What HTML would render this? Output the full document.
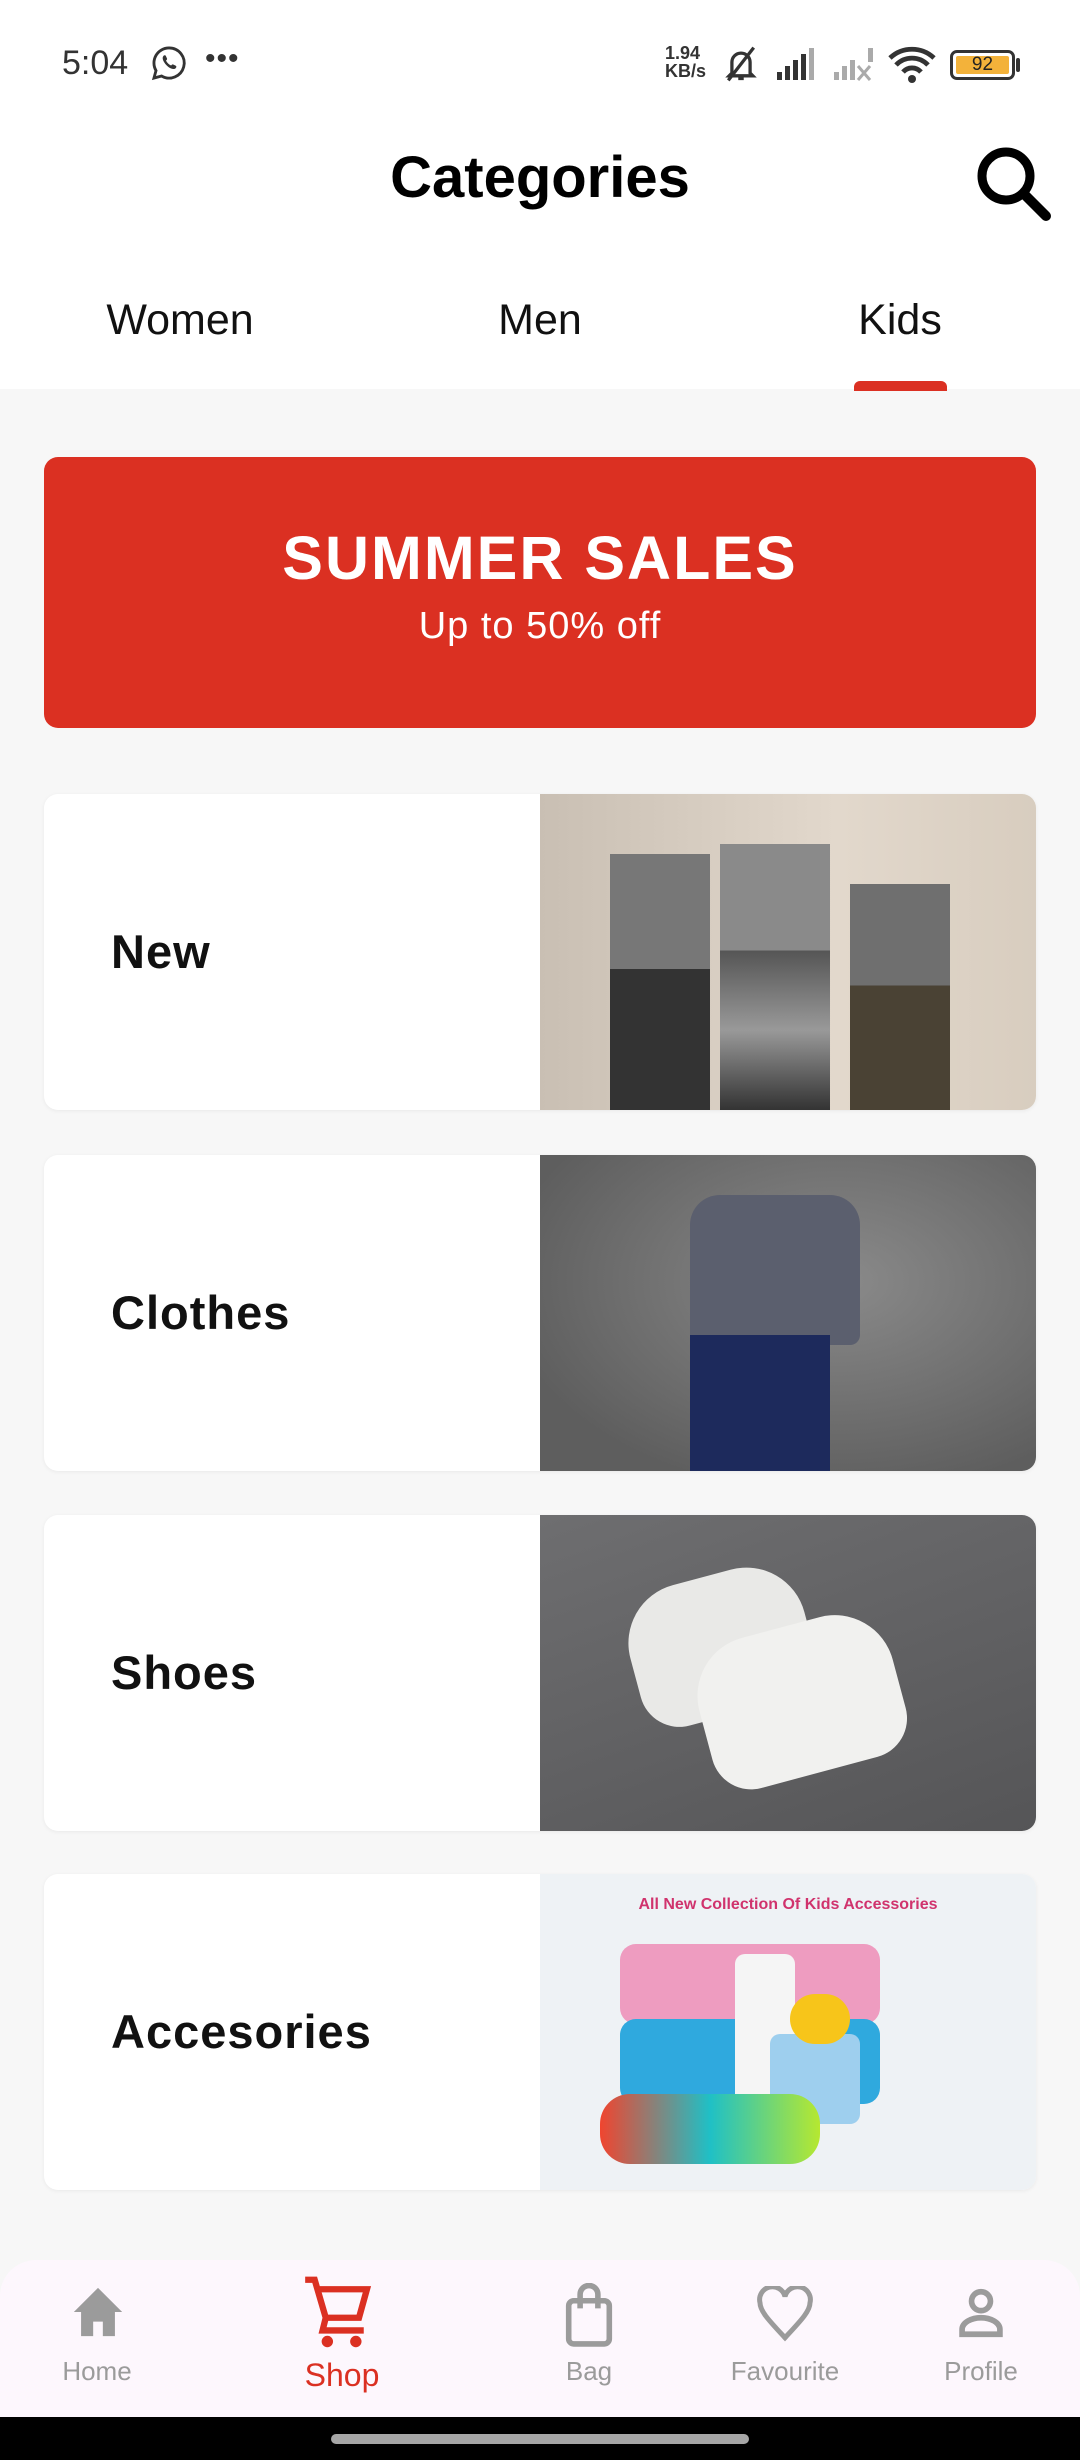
<!DOCTYPE html>
<html><head><meta charset="utf-8"><style>
*{margin:0;padding:0;box-sizing:border-box}
body{width:1080px;height:2460px;background:#f7f7f7;font-family:"Liberation Sans",sans-serif;position:relative;overflow:hidden}
.abs{position:absolute}
.hdr{left:0;top:0;width:1080px;height:389px;background:#fff}
.tab{top:296px;font-size:43px;color:#111;transform:translateX(-50%)}
.banner{left:44px;top:457px;width:992px;height:271px;background:#db3022;border-radius:14px;color:#fff;text-align:center}
.card{left:44px;width:992px;height:316px;background:#fff;border-radius:14px;overflow:hidden;box-shadow:0 1px 4px rgba(0,0,0,.06)}
.card .t{position:absolute;left:67px;top:0;line-height:316px;font-size:47px;font-weight:bold;color:#111;letter-spacing:1px}
.card .img{position:absolute;left:496px;top:0;width:496px;height:316px}
.nav{left:0;top:2260px;width:1080px;height:157px;background:#fdf7fd;border-radius:36px 36px 0 0}
.lbl{top:2356px;font-size:26px;color:#9b9b9b;transform:translateX(-50%)}
</style></head><body>
<div class="abs hdr"></div>
<div class="abs" style="left:62px;top:44px;font-size:34px;color:#333">5:04</div>
<svg class="abs" style="left:150px;top:44px" width="38" height="38" viewBox="0 0 24 24"><path d="M12 2.5a9.5 9.5 0 0 0-8.2 14.3L2.5 21.5l4.8-1.3A9.5 9.5 0 1 0 12 2.5z" fill="none" stroke="#333" stroke-width="1.8"/><path d="M8.5 7.5c.5-.6 1.2-.5 1.5 0l.8 1.8c.1.4-.4.9-.7 1.2.7 1.4 1.8 2.4 3.2 3.1.3-.3.8-.9 1.2-.7l1.8.8c.5.3.5 1-.1 1.6-1.5 1.4-4.5-.4-6-2.1s-3-4.2-1.7-5.7z" fill="#333"/></svg>
<div class="abs" style="left:205px;top:42px;font-size:30px;color:#333;letter-spacing:1px">•••</div>
<div class="abs" style="left:665px;top:44px;font-size:18px;line-height:18px;color:#333;font-weight:bold">1.94<br>KB/s</div>
<svg class="abs" style="left:718px;top:44px" width="46" height="40" viewBox="0 0 24 22"><path d="M7 16V10a5 5 0 0 1 10 0v6l1.5 1.5h-13z M10.5 19h3" fill="none" stroke="#333" stroke-width="1.8"/><path d="M5 20L19 2" stroke="#333" stroke-width="1.8"/></svg>
<svg class="abs" style="left:775px;top:46px" width="50" height="36" viewBox="0 0 50 36"><rect x="2" y="26" width="5" height="8" fill="#333"/><rect x="10" y="20" width="5" height="14" fill="#333"/><rect x="18" y="14" width="5" height="20" fill="#333"/><rect x="26" y="8" width="5" height="26" fill="#333"/><rect x="34" y="2" width="5" height="32" fill="#aaa"/></svg>
<svg class="abs" style="left:832px;top:46px" width="46" height="36" viewBox="0 0 46 36"><rect x="2" y="26" width="5" height="8" fill="#aaa"/><rect x="10" y="20" width="5" height="14" fill="#aaa"/><rect x="18" y="14" width="5" height="20" fill="#aaa"/><rect x="36" y="2" width="5" height="14" fill="#aaa"/><path d="M26 20l12 14M38 20L26 34" stroke="#aaa" stroke-width="3"/></svg>
<svg class="abs" style="left:888px;top:44px" width="48" height="40" viewBox="0 0 24 20"><path d="M1 7a16 16 0 0 1 22 0M4 10.5a11 11 0 0 1 16 0M7.5 14a6 6 0 0 1 9 0" fill="none" stroke="#333" stroke-width="2.4"/><circle cx="12" cy="17.5" r="2" fill="#333"/></svg>
<div class="abs" style="left:950px;top:50px;width:65px;height:30px;border:3px solid #333;border-radius:7px;padding:3px"><div style="width:100%;height:100%;background:#f3b23a;border-radius:2px;font-size:19px;line-height:18px;text-align:center;color:#222">92</div></div>
<div class="abs" style="left:1016px;top:58px;width:4px;height:14px;background:#333;border-radius:2px"></div>

<div class="abs" style="left:0;width:1080px;top:144px;text-align:center;font-size:58px;font-weight:bold;color:#000">Categories</div>
<svg class="abs" style="left:974px;top:144px" width="80" height="78" viewBox="0 0 40 39"><circle cx="16" cy="16" r="12" fill="none" stroke="#000" stroke-width="4.5"/><path d="M25 25l11 11" stroke="#000" stroke-width="5" stroke-linecap="round"/></svg>

<div class="abs tab" style="left:180px">Women</div>
<div class="abs tab" style="left:540px">Men</div>
<div class="abs tab" style="left:900px">Kids</div>
<div class="abs" style="left:854px;top:381px;width:93px;height:10px;background:#db3022;border-radius:6px 6px 0 0"></div>

<div class="abs banner">
<div style="margin-top:66px;font-size:61px;font-weight:bold;letter-spacing:2px">SUMMER SALES</div>
<div style="margin-top:12px;font-size:38px;letter-spacing:1px">Up to 50% off</div>
</div>

<div class="abs card" style="top:794px"><div class="t">New</div>
<div class="img" style="background:linear-gradient(90deg,#c9bfb3,#e2d8cc 60%,#d8cdbf)">
<div class="abs" style="left:70px;top:60px;width:100px;height:256px;background:linear-gradient(#777 0,#777 45%,#333 45%)"></div>
<div class="abs" style="left:180px;top:50px;width:110px;height:266px;background:linear-gradient(#8a8a8a 0,#8a8a8a 40%,#555 40%,#999 70%,#333)"></div>
<div class="abs" style="left:310px;top:90px;width:100px;height:226px;background:linear-gradient(#6f6f6f 0,#6f6f6f 45%,#4a4234 45%)"></div>
</div></div>

<div class="abs card" style="top:1155px"><div class="t">Clothes</div>
<div class="img" style="background:radial-gradient(ellipse at 60% 40%,#8a8a8a,#5e5e5e 80%)">
<div class="abs" style="left:150px;top:40px;width:170px;height:150px;background:#5b5f6e;border-radius:30px 30px 10px 10px"></div>
<div class="abs" style="left:150px;top:180px;width:140px;height:136px;background:#1d2a5c"></div>
</div></div>

<div class="abs card" style="top:1515px"><div class="t">Shoes</div>
<div class="img" style="background:linear-gradient(160deg,#6e6e70,#555557)">
<div class="abs" style="left:90px;top:60px;width:180px;height:140px;background:#e9e9e7;border-radius:60px 60px 40px 40px;transform:rotate(-15deg)"></div>
<div class="abs" style="left:160px;top:110px;width:200px;height:150px;background:#f1f1ef;border-radius:60px 60px 40px 40px;transform:rotate(-15deg)"></div>
</div></div>

<div class="abs card" style="top:1874px"><div class="t">Accesories</div>
<div class="img" style="background:#eef2f5">
<div class="abs" style="left:0;width:496px;top:22px;text-align:center;font-size:16px;color:#d0336d;font-weight:bold">All New Collection Of Kids Accessories</div>
<div class="abs" style="left:80px;top:70px;width:260px;height:80px;background:#ee9cc0;border-radius:16px"></div>
<div class="abs" style="left:80px;top:145px;width:260px;height:85px;background:#2fa9de;border-radius:16px"></div>
<div class="abs" style="left:195px;top:80px;width:60px;height:170px;background:#f5f5f5;border-radius:10px"></div>
<div class="abs" style="left:230px;top:160px;width:90px;height:90px;background:#9ecfee;border-radius:10px"></div>
<div class="abs" style="left:250px;top:120px;width:60px;height:50px;background:#f7c51a;border-radius:30px"></div>
<div class="abs" style="left:60px;top:220px;width:220px;height:70px;background:linear-gradient(90deg,#f0452f,#1fc0c6,#b6e830);border-radius:30px"></div>
</div></div>

<div class="abs nav"></div>
<svg class="abs" style="left:69px;top:2285px" width="58" height="54" viewBox="0 0 24 22"><path d="M12 1L2 11h3v10h5v-6h4v6h5V11h3z" fill="#9b9b9b"/></svg>
<svg class="abs" style="left:302px;top:2275px" width="76" height="76" viewBox="0 0 24 24"><path d="M1 1.5h3l3.5 12h10.5l2.5-9H5" fill="none" stroke="#db3022" stroke-width="2"/><path d="M7.5 13.5l-1 4h13" fill="none" stroke="#db3022" stroke-width="2"/><circle cx="8" cy="21" r="1.8" fill="#db3022"/><circle cx="17" cy="21" r="1.8" fill="#db3022"/></svg>
<svg class="abs" style="left:563px;top:2283px" width="52" height="66" viewBox="0 0 20 26"><rect x="2" y="7" width="16" height="17" rx="2" fill="none" stroke="#9b9b9b" stroke-width="2.2"/><path d="M6.5 10V4.5a3.5 3.5 0 0 1 7 0V10" fill="none" stroke="#9b9b9b" stroke-width="2.2"/></svg>
<svg class="abs" style="left:755px;top:2286px" width="60" height="56" viewBox="0 0 24 22"><path d="M12 20.5C6 14 2 10 2 6.5A4.5 4.5 0 0 1 12 4a4.5 4.5 0 0 1 10 2.5c0 3.5-4 7.5-10 14z" fill="none" stroke="#9b9b9b" stroke-width="2"/></svg>
<svg class="abs" style="left:957px;top:2287px" width="48" height="52" viewBox="0 0 20 22"><circle cx="10" cy="6" r="4" fill="none" stroke="#9b9b9b" stroke-width="2.4"/><path d="M2 20v-2c0-3 4-5 8-5s8 2 8 5v2z" fill="none" stroke="#9b9b9b" stroke-width="2.4"/></svg>
<div class="abs lbl" style="left:97px">Home</div>
<div class="abs lbl" style="left:342px;top:2357px;font-size:32px;color:#db3022">Shop</div>
<div class="abs lbl" style="left:589px">Bag</div>
<div class="abs lbl" style="left:785px">Favourite</div>
<div class="abs lbl" style="left:981px">Profile</div>

<div class="abs" style="left:0;top:2417px;width:1080px;height:43px;background:#000"></div>
<div class="abs" style="left:331px;top:2434px;width:418px;height:10px;background:#a6a6a6;border-radius:5px"></div>
</body></html>
